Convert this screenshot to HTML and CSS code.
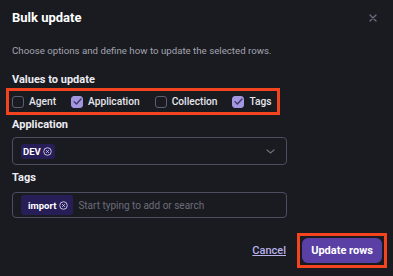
FILE: index.html
```html
<!DOCTYPE html>
<html lang="en">
<head>
    <meta charset="UTF-8">
    <meta name="viewport" content="width=device-width, initial-scale=1.0">
    <title>Bulk update</title>
    <link rel="stylesheet" href="styles.css">
</head>
<body>
    <div class="dialog">
        <div class="dialog-head">
            <h2>Bulk update</h2>
            <button class="close" aria-label="Close">
                <svg width="8" height="8" viewBox="0 0 8 8"><path d="M1 1L7 7M7 1L1 7" stroke="#6c6e82" stroke-width="1.3" stroke-linecap="round"/></svg>
            </button>
        </div>

        <p class="desc">Choose options and define how to update the selected rows.</p>

        <div class="field-label">Values to update</div>
        <div class="choices">
            <label class="check"><span class="box"></span>Agent</label>
            <label class="check"><span class="box on"><svg width="9" height="7" viewBox="0 0 9 7"><path d="M1 3.6L3.4 6L8 1" fill="none" stroke="#3b3466" stroke-width="1.3" stroke-linecap="round" stroke-linejoin="round"/></svg></span>Application</label>
            <label class="check"><span class="box"></span>Collection</label>
            <label class="check"><span class="box on"><svg width="9" height="7" viewBox="0 0 9 7"><path d="M1 3.6L3.4 6L8 1" fill="none" stroke="#3b3466" stroke-width="1.3" stroke-linecap="round" stroke-linejoin="round"/></svg></span>Tags</label>
        </div>

        <div class="field-label">Application</div>
        <div class="select">
            <span class="chip chip-sm">DEV<svg width="9" height="9" viewBox="0 0 10 10"><circle cx="5" cy="5" r="4.2" fill="none" stroke="#d8d2f4" stroke-width="1"/><path d="M3.5 3.5L6.5 6.5M6.5 3.5L3.5 6.5" stroke="#d8d2f4" stroke-width="1"/></svg></span>
            <svg class="chevron" width="9" height="5" viewBox="0 0 9 5"><path d="M1 1L4.5 4L8 1" fill="none" stroke="#6c6e80" stroke-width="1.2" stroke-linecap="round"/></svg>
        </div>

        <div class="field-label tags-label">Tags</div>
        <div class="tags-input">
            <span class="chip">import<svg width="9" height="9" viewBox="0 0 10 10"><circle cx="5" cy="5" r="4.2" fill="none" stroke="#d8d2f4" stroke-width="1"/><path d="M3.5 3.5L6.5 6.5M6.5 3.5L3.5 6.5" stroke="#d8d2f4" stroke-width="1"/></svg></span>
            <span class="placeholder">Start typing to add or search</span>
        </div>

        <div class="dialog-foot">
            <a href="#" class="cancel">Cancel</a>
            <span class="highlight"><button class="primary">Update rows</button></span>
        </div>
    </div>
</body>
</html>
```
FILE: styles.css
```css
body {
    margin: 0;
    background-color: #1a1b21;
    font-family: 'Roboto', 'Noto Sans', sans-serif;
    color: #e8e8ee;
}

.dialog {
    padding: 0 6px 0 12px;
}

.dialog-head {
    display: flex;
    justify-content: space-between;
    align-items: center;
    padding-top: 10px;
    height: 16px;
}

.dialog-head h2 {
    margin: 0;
    font-size: 13px;
    line-height: 16px;
    font-weight: 700;
    color: #ffffff;
}

.close {
    background: none;
    border: none;
    padding: 0;
    margin-right: 10px;
    display: flex;
    cursor: pointer;
}

.desc {
    margin: 18px 0 15px;
    font-size: 9.7px;
    line-height: 14px;
    color: #a3a4ae;
}

.field-label {
    font-size: 11px;
    line-height: 14px;
    font-weight: 700;
    color: #ececf2;
}

.choices {
    display: inline-flex;
    align-items: center;
    gap: 15px;
    height: 21px;
    margin: 1px 0 3px -6px;
    padding: 0 5px 0 3px;
    border: 3px solid #f4431f;
}

.check {
    display: flex;
    align-items: center;
    gap: 5px;
    font-size: 10.2px;
    font-weight: 500;
    color: #e6e6ec;
}

.box {
    width: 10px;
    height: 10px;
    border: 1.5px solid #5c5e72;
    border-radius: 3px;
    display: flex;
    align-items: center;
    justify-content: center;
}

.box.on {
    background-color: #a395e0;
    border-color: #a395e0;
}

.select,
.tags-input {
    display: flex;
    align-items: center;
    width: 275px;
    box-sizing: border-box;
    border: 1px solid #4b4d60;
    border-radius: 4px;
    padding: 0 8px;
}

.select {
    height: 28px;
    margin-top: 5px;
    justify-content: space-between;
    padding-right: 11px;
}

.tags-label {
    margin-top: 6px;
}

.tags-input {
    height: 26px;
    margin-top: 7px;
    gap: 5px;
}

.chip {
    display: inline-flex;
    align-items: center;
    gap: 3px;
    height: 20px;
    padding: 0 5px 0 7px;
    background-color: #271d57;
    border-radius: 3px;
    font-size: 9.5px;
    font-weight: 700;
    color: #ffffff;
}

.chip-sm {
    height: 15px;
    padding: 0 3px 0 2px;
    gap: 2px;
}

.placeholder {
    font-size: 10px;
    color: #6b6c7a;
}

.dialog-foot {
    display: flex;
    justify-content: flex-end;
    align-items: center;
    gap: 11px;
    margin-top: 15px;
}

.cancel {
    font-size: 11px;
    font-weight: 500;
    color: #b9b2ea;
}

.highlight {
    display: flex;
    padding: 2px;
    border: 3px solid #f4431f;
}

.primary {
    font-family: inherit;
    font-size: 11px;
    font-weight: 700;
    color: #ffffff;
    background-color: #5a3fa5;
    border: none;
    border-radius: 6px;
    width: 80px;
    height: 25px;
    cursor: pointer;
}
```
